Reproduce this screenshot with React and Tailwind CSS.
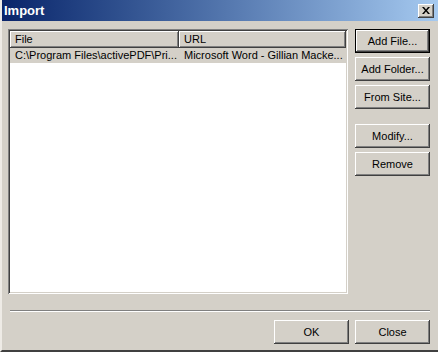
import React from "react";

const raised =
  "shadow-[inset_-1px_-1px_0_#404040,inset_1px_1px_0_#ffffff,inset_-2px_-2px_0_#808080]";

function Button({ children, isDefault, className = "" }) {
  return (
    <button
      className={`h-[24px] w-[75px] bg-[#d4d0c8] text-[11px] text-black ${
        isDefault
          ? "border border-black shadow-[inset_-1px_-1px_0_#404040,inset_1px_1px_0_#ffffff,inset_-2px_-2px_0_#808080]"
          : raised
      } ${className}`}
    >
      {children}
    </button>
  );
}

function HeaderCell({ children, className = "" }) {
  return (
    <div
      className={`h-[17px] flex items-center pl-[5px] text-[11px] bg-[#d4d0c8] ${raised} ${className}`}
    >
      {children}
    </div>
  );
}

export default function App() {
  return (
    <div
      className="w-[438px] h-[352px] bg-[#d4d0c8] flex flex-col border-l-2 border-l-[#eeebe6] border-b-2 border-b-[#404040] overflow-hidden"
      style={{ fontFamily: '"Liberation Sans", Arial, sans-serif' }}
    >
      {/* title bar */}
      <div className="h-[21px] shrink-0 flex items-center justify-between pl-[2px] pr-[4px] bg-gradient-to-r from-[#0a246a] to-[#a6caf0]">
        <span className="text-white font-bold text-[13px]">Import</span>
        <div
          className={`w-[16px] h-[14px] bg-[#d4d0c8] flex items-center justify-center ${raised}`}
        >
          <svg width="8" height="7" viewBox="0 0 8 7">
            <path d="M0 0h2l2 2.5L6 0h2L5 3.5 8 7H6L4 4.5 2 7H0l3-3.5z" fill="#000" />
          </svg>
        </div>
      </div>

      {/* body */}
      <div className="flex-1 flex flex-col pl-[6px] pr-[8px] pt-[8px]">
        <div className="flex gap-[7px]">
          {/* list view */}
          <div className="w-[340px] h-[265px] bg-white p-[2px] shadow-[inset_1px_1px_0_#808080,inset_-1px_-1px_0_#ffffff,inset_2px_2px_0_#404040,inset_-2px_-2px_0_#d4d0c8]">
            <div className="flex">
              <HeaderCell className="w-[169px]">File</HeaderCell>
              <HeaderCell className="w-[167px]">URL</HeaderCell>
            </div>
            <div className="flex h-[15px] items-center bg-[#d4d0c8] text-[11px] text-black whitespace-nowrap">
              <div className="w-[169px] pl-[5px] overflow-hidden">
                C:\Program Files\activePDF\Pri...
              </div>
              <div className="w-[167px] pl-[5px] overflow-hidden">
                Microsoft Word - Gillian Macke...
              </div>
            </div>
          </div>

          {/* side buttons */}
          <div className="flex flex-col">
            <Button isDefault>Add File...</Button>
            <Button className="mt-[4px]">Add Folder...</Button>
            <Button className="mt-[4px]">From Site...</Button>
            <Button className="mt-[15px]">Modify...</Button>
            <Button className="mt-[4px]">Remove</Button>
          </div>
        </div>

        {/* separator */}
        <div className="mt-[16px] ml-[2px] border-t border-t-[#808080] border-b border-b-white" />

        <div className="mt-[8px] flex justify-end gap-[6px]">
          <Button>OK</Button>
          <Button>Close</Button>
        </div>
      </div>
    </div>
  );
}
